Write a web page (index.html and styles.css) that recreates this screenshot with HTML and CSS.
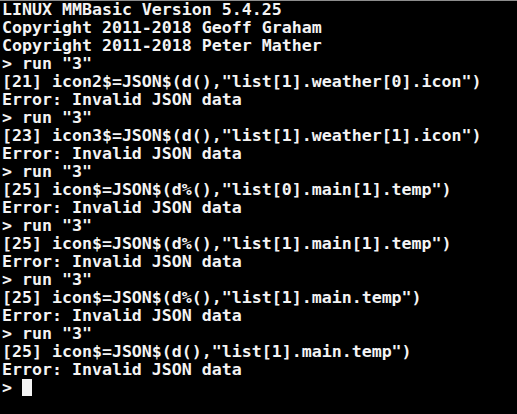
FILE: index.html
```html
<!DOCTYPE html>
<html lang="en">
<head>
    <meta charset="UTF-8">
    <meta name="viewport" content="width=device-width, initial-scale=1.0">
    <title>MMBasic console</title>
    <link rel="stylesheet" href="styles.css">
</head>
<body>
    <div class="console">
        <div class="line">LINUX MMBasic Version 5.4.25</div>
        <div class="line">Copyright 2011-2018 Geoff Graham</div>
        <div class="line">Copyright 2011-2018 Peter Mather</div>
        <div class="line">&gt; run "3"</div>
        <div class="line">[21] icon2$=JSON$(d(),"list[1].weather[0].icon")</div>
        <div class="line">Error: Invalid JSON data</div>
        <div class="line">&gt; run "3"</div>
        <div class="line">[23] icon3$=JSON$(d(),"list[1].weather[1].icon")</div>
        <div class="line">Error: Invalid JSON data</div>
        <div class="line">&gt; run "3"</div>
        <div class="line">[25] icon$=JSON$(d%(),"list[0].main[1].temp")</div>
        <div class="line">Error: Invalid JSON data</div>
        <div class="line">&gt; run "3"</div>
        <div class="line">[25] icon$=JSON$(d%(),"list[1].main[1].temp")</div>
        <div class="line">Error: Invalid JSON data</div>
        <div class="line">&gt; run "3"</div>
        <div class="line">[25] icon$=JSON$(d%(),"list[1].main.temp")</div>
        <div class="line">Error: Invalid JSON data</div>
        <div class="line">&gt; run "3"</div>
        <div class="line">[25] icon$=JSON$(d(),"list[1].main.temp")</div>
        <div class="line">Error: Invalid JSON data</div>
        <div class="line">&gt; <span class="cursor"></span></div>
    </div>
</body>
</html>
```

FILE: styles.css
```css
* {
    margin: 0;
    padding: 0;
    box-sizing: border-box;
}

html, body {
    height: 100%;
    background-color: #000;
}

body {
    border-top: 1px solid #8c8c8c;
    overflow: hidden;
}

/* Console text */
.console {
    padding-left: 2px;
    color: #f4f4f4;
    font-family: "DejaVu Sans Mono", monospace;
    font-size: 16.6px;
    font-weight: bold;
    line-height: 18px;
}

.line {
    height: 18px;
    white-space: pre;
}

.cursor {
    display: inline-block;
    width: 10px;
    height: 17px;
    background-color: #f4f4f4;
    vertical-align: top;
}
```
